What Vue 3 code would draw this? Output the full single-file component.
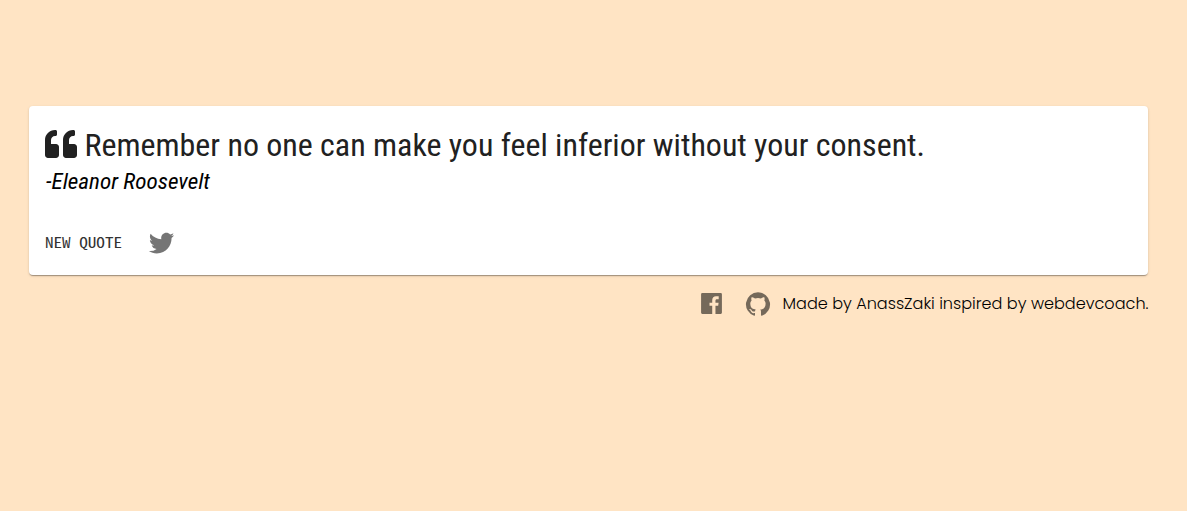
<script setup>
const quote = 'Remember no one can make you feel inferior without your consent.'
const author = '-Eleanor Roosevelt'
</script>

<template>
  <main class="page">
    <section class="card">
      <div class="quote">
        <svg class="mark" viewBox="0 0 512 512"><path d="M464 256h-80v-64c0-35.300 28.700-64 64-64h8c13.300 0 24-10.700 24-24V56c0-13.300-10.700-24-24-24h-8c-88.400 0-160 71.600-160 160v240c0 26.500 21.500 48 48 48h128c26.500 0 48-21.500 48-48V304c0-26.500-21.500-48-48-48zm-288 0H96v-64c0-35.300 28.700-64 64-64h8c13.300 0 24-10.700 24-24V56c0-13.300-10.700-24-24-24h-8C71.600 32 0 103.600 0 192v240c0 26.500 21.500 48 48 48h128c26.500 0 48-21.500 48-48V304c0-26.500-21.500-48-48-48z" /></svg>
        <svg class="quote-text" width="845" height="42"><text x="-0.5" y="29" textLength="840.5" lengthAdjust="spacingAndGlyphs">{{ quote }}</text></svg>
      </div>
      <svg class="author" width="200" height="30"><text x="1" y="20" textLength="164" lengthAdjust="spacingAndGlyphs">{{ author }}</text></svg>
      <div class="actions">
        <button class="new-quote" type="button">
          <svg width="78" height="20"><text x="0" y="16" textLength="77" lengthAdjust="spacingAndGlyphs">NEW QUOTE</text></svg>
        </button>
        <svg class="icon twitter" viewBox="0 0 24 24"><path d="M22.460 6c-.77.35-1.600.58-2.460.69.88-.53 1.560-1.370 1.880-2.380-.83.5-1.750.85-2.720 1.050C18.370 4.500 17.260 4 16 4c-2.350 0-4.270 1.920-4.270 4.290 0 .34.040.67.110.98C8.280 9.090 5.110 7.380 3 4.790c-.37.63-.58 1.370-.58 2.150 0 1.490.75 2.810 1.910 3.560-.71 0-1.370-.2-1.950-.5v.030c0 2.080 1.480 3.820 3.440 4.210a4.220 4.220 0 0 1-1.930.070 4.280 4.280 0 0 0 4 2.980 8.521 8.521 0 0 1-5.330 1.840c-.34 0-.68-.020-1.020-.060C3.440 20.290 5.700 21 8.120 21 16 21 20.330 14.460 20.330 8.790c0-.19 0-.37-.010-.56.84-.6 1.560-1.360 2.140-2.230z" /></svg>
      </div>
    </section>
    <footer class="footer">
      <svg class="icon" viewBox="0 0 24 24"><path d="M20.900 2H3.100A1.100 1.100 0 0 0 2 3.100v17.800A1.100 1.100 0 0 0 3.100 22h9.590v-7.750h-2.600v-3h2.600V9a3.640 3.640 0 0 1 3.880-4 20.260 20.260 0 0 1 2.330.12v2.700H17.300c-1.260 0-1.500.6-1.500 1.470v1.930h3l-.39 3H15.800V22h5.100a1.100 1.100 0 0 0 1.100-1.100V3.100A1.100 1.100 0 0 0 20.900 2z" /></svg>
      <svg class="icon github" viewBox="0 0 24 24"><path d="M12 .3a12 12 0 0 0-3.800 23.400c.6.1.8-.3.8-.6v-2c-3.300.7-4-1.600-4-1.600-.6-1.400-1.400-1.800-1.400-1.800-1-.7.1-.7.1-.7 1.200 0 1.900 1.200 1.900 1.200 1 1.800 2.800 1.300 3.500 1 0-.8.4-1.300.7-1.600-2.700-.3-5.500-1.300-5.500-6 0-1.200.5-2.300 1.300-3.100-.2-.4-.6-1.600 0-3.200 0 0 1-.3 3.400 1.200a11.500 11.500 0 0 1 6 0c2.300-1.500 3.300-1.200 3.300-1.200.6 1.600.2 2.800 0 3.200.9.8 1.300 1.900 1.300 3.200 0 4.600-2.800 5.600-5.500 5.900.5.4.9 1 .9 2.200v3.300c0 .3.1.7.8.6A12 12 0 0 0 12 .3" /></svg>
      <svg class="credit" width="366" height="26"><text x="0.5" y="18" textLength="366" lengthAdjust="spacingAndGlyphs">Made by AnassZaki inspired by webdevcoach.</text></svg>
    </footer>
  </main>
</template>

<style>
body {
  margin: 0;
  background: #ffe4c4;
}
</style>

<style scoped>
.page {
  box-sizing: border-box;
  min-height: 511px;
  padding: 106px 39px 0 29px;
}
.card {
  box-sizing: border-box;
  height: 169px;
  padding: 21px 16px 0;
  background: #fff;
  border-radius: 4px;
  box-shadow: 0 2px 1px -1px rgba(0, 0, 0, 0.2), 0 1px 1px rgba(0, 0, 0, 0.14), 0 1px 3px rgba(0, 0, 0, 0.12);
}
svg {
  display: block;
  overflow: visible;
}
.quote {
  display: flex;
  height: 42px;
  gap: 8px;
  color: #212121;
}
.mark {
  width: 32px;
  height: 32px;
  margin-top: 1px;
  fill: #212121;
}
.quote-text {
  font-family: "Roboto Condensed", Roboto, sans-serif;
  font-size: 32px;
  font-weight: 400;
  fill: #212121;
}
.author {
  font-family: "Roboto Condensed", Roboto, sans-serif;
  font-size: 22.500px;
  font-weight: 400;
  font-style: italic;
  fill: #000;
}
.actions {
  display: flex;
  align-items: center;
  height: 48px;
  margin-top: 19px;
}
.new-quote {
  padding: 0;
  border: 0;
  background: none;
}
.new-quote svg {
  font: 300 14px "Noto Sans Mono CJK SC", "Noto Sans Mono CJK JP", "IBM Plex Mono", "DejaVu Sans Mono", monospace;
  fill: #333;
}
.icon {
  width: 25px;
  height: 25px;
  fill: rgba(0, 0, 0, 0.54);
}
.twitter {
  width: 29px;
  height: 29px;
  margin-left: 24px;
}
.footer {
  display: flex;
  align-items: center;
  justify-content: flex-end;
  height: 57px;
}
.github {
  width: 24px;
  height: 24px;
  margin: 0 12px 0 22px;
}
.credit {
  font-family: Poppins, Inter, sans-serif;
  font-size: 16px;
  font-weight: 300;
  fill: #000;
}
</style>
